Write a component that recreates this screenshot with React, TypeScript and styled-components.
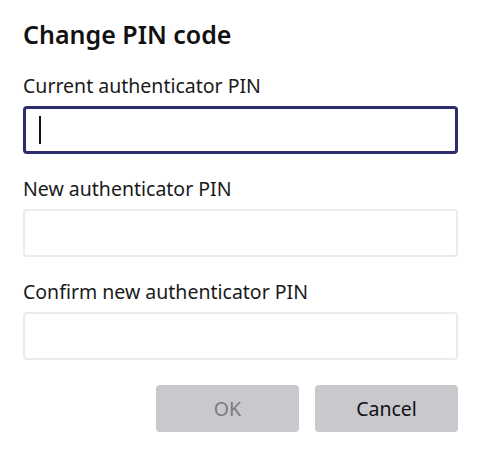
import styled, { createGlobalStyle } from 'styled-components';

const GlobalStyle = createGlobalStyle`
  body {
    margin: 0;
    background: #ffffff;
    font-family: 'Noto Sans', 'Open Sans', sans-serif;
    color: #1a1a1a;
  }
`;

const Dialog = styled.div`
  width: 480px;
  height: 456px;
  box-sizing: border-box;
  padding: 17px 22px 0 23px;
  display: flex;
  flex-direction: column;
`;

const Title = styled.h1`
  margin: 0;
  font-size: 25px;
  font-weight: 600;
  line-height: 34px;
  color: #111;
`;

const Field = styled.div<{ $top: number }>`
  display: flex;
  flex-direction: column;
  margin-top: ${(p) => p.$top}px;
`;

const Label = styled.label`
  font-size: 19.5px;
  line-height: 28px;
  margin-bottom: 6px;
  color: #1a1a1a;
`;

const Input = styled.input<{ $focused?: boolean }>`
  box-sizing: border-box;
  width: 435px;
  height: 48px;
  border-radius: 4px;
  border: ${(p) => (p.$focused ? '3px solid #2b2d6d' : '2px solid #ebebeb')};
  outline: none;
  padding: 0 14px;
  font-size: 20px;
  font-family: inherit;
  background: #fff;
`;

const Caret = styled.span`
  position: absolute;
  left: 16px;
  top: 10px;
  width: 2px;
  height: 28px;
  background: #111;
`;

const InputWrap = styled.div`
  position: relative;
  width: 435px;
`;

const Actions = styled.div`
  display: flex;
  justify-content: flex-end;
  gap: 16px;
  margin-top: 25px;
  width: 435px;
`;

const Button = styled.button<{ $disabled?: boolean }>`
  width: 143px;
  height: 47px;
  border: none;
  border-radius: 4px;
  background: #c9c8cd;
  font-family: inherit;
  font-size: 19.5px;
  color: ${(p) => (p.$disabled ? '#7b7b7e' : '#111')};
  padding: 0;
`;

export default function App() {
  return (
    <>
      <GlobalStyle />
      <Dialog>
        <Title>Change PIN code</Title>
        <Field $top={21}>
          <Label>Current authenticator PIN</Label>
          <InputWrap>
            <Input $focused />
            <Caret />
          </InputWrap>
        </Field>
        <Field $top={21}>
          <Label>New authenticator PIN</Label>
          <Input />
        </Field>
        <Field $top={21}>
          <Label>Confirm new authenticator PIN</Label>
          <Input />
        </Field>
        <Actions>
          <Button $disabled>OK</Button>
          <Button>Cancel</Button>
        </Actions>
      </Dialog>
    </>
  );
}
